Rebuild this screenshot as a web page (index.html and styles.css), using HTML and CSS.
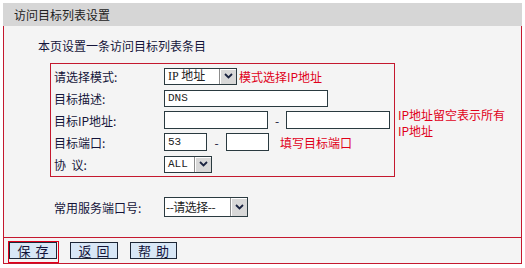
FILE: index.html
```html
<!DOCTYPE html>
<html lang="zh-CN">
<head>
<meta charset="utf-8">
<title>访问目标列表设置</title>
<link rel="stylesheet" href="styles.css">
</head>
<body>
<div class="page">
  <div class="hdr">访问目标列表设置</div>
  <div class="body">
    <div class="intro">本页设置一条访问目标列表条目</div>
    <div class="grp">
      <div class="box">
        <div class="row">
          <span class="lbl">请选择模式:</span>
          <span class="sel w-mode"><span class="val v-mode">IP 地址</span><span class="arr"><svg width="9" height="6" viewBox="0 0 9 6"><path d="M1 1 L4.5 4.5 L8 1" fill="none" stroke="#1a2340" stroke-width="1.8"/></svg></span></span>
          <span class="red m-mode">模式选择IP地址</span>
        </div>
        <div class="row">
          <span class="lbl">目标描述:</span>
          <span class="inp w-dns">DNS</span>
        </div>
        <div class="row">
          <span class="lbl">目标IP地址:</span>
          <span class="inp w-ip tall"></span>
          <span class="dash">-</span>
          <span class="inp w-ip tall"></span>
        </div>
        <div class="row">
          <span class="lbl">目标端口:</span>
          <span class="inp w-port tall">53</span>
          <span class="dash d-port">-</span>
          <span class="inp w-port tall"></span>
          <span class="red m-port">填写目标端口</span>
        </div>
        <div class="row">
          <span class="lbl">协&nbsp;&nbsp;议:</span>
          <span class="sel w-proto"><span class="val">ALL</span><span class="arr"><svg width="9" height="6" viewBox="0 0 9 6"><path d="M1 1 L4.5 4.5 L8 1" fill="none" stroke="#1a2340" stroke-width="1.8"/></svg></span></span>
        </div>
      </div>
      <div class="note red">IP地址留空表示所有IP地址</div>
    </div>
    <div class="row svc">
      <span class="lbl2">常用服务端口号:</span>
      <span class="sel w-svc"><span class="val cjk">--请选择--</span><span class="arr"><svg width="9" height="6" viewBox="0 0 9 6"><path d="M1 1 L4.5 4.5 L8 1" fill="none" stroke="#1a2340" stroke-width="1.8"/></svg></span></span>
    </div>
  </div>
  <div class="btns">
    <span class="bwrap"><span class="btn">保 存</span><span class="hl"></span></span>
    <span class="btn b2">返 回</span>
    <span class="btn b3">帮 助</span>
  </div>
</div>
</body>
</html>
```
FILE: styles.css
```css
html, body {
  margin: 0;
  padding: 0;
  background: #ffffff;
}
.page {
  margin: 3px 0 0 3px;
  width: 519px;
  font: 12px "Noto Sans CJK SC", "Noto Sans", sans-serif;
  color: #14143a;
}
.hdr {
  height: 23px;
  line-height: 23px;
  background: #d6d6d6;
  padding-left: 11px;
  color: #222222;
  font-size: 12px;
}
.body {
  box-sizing: border-box;
  height: 211px;
  border-left: 1px solid #c4182e;
  border-right: 1px solid #c4182e;
  background: #f4f4f4;
  padding: 12px 0 0 34px;
}
.intro {
  line-height: 16px;
}
.grp {
  display: flex;
  align-items: center;
  margin: 9px 0 0 12px;
}
.box {
  width: 343px;
  border: 1px solid #c4182e;
  padding: 1px 0;
}
.row {
  display: flex;
  align-items: center;
  height: 22px;
}
.lbl {
  box-sizing: border-box;
  width: 113px;
  padding-left: 3px;
}
.inp {
  box-sizing: border-box;
  height: 17px;
  border: 1px solid #2a3a40;
  background: #ffffff;
  font: 11px "Liberation Mono", monospace;
  line-height: 15px;
  padding-left: 3px;
  color: #222222;
}
.inp.tall {
  height: 18px;
  line-height: 16px;
}
.w-dns { width: 164px; }
.w-ip { width: 104px; }
.w-port { width: 43px; }
.dash {
  width: 18px;
  text-align: center;
}
.d-port { width: 19px; }
.red {
  color: #e0001a;
}
.m-mode { margin-left: 2px; }
.m-port { margin-left: 11px; }
.sel {
  box-sizing: border-box;
  display: inline-flex;
  height: 17px;
  border: 1px solid #2a3a40;
  background: #ffffff;
}
.sel .val {
  flex: 1;
  padding-left: 3px;
  font: 11px "Liberation Mono", "Noto Sans CJK SC", monospace;
  line-height: 15px;
  color: #222222;
  white-space: nowrap;
  overflow: hidden;
}
.sel .val.v-mode {
  font: 12px "Liberation Serif", "Noto Sans CJK SC", serif;
  line-height: 15px;
}
.sel .val.cjk {
  font: 12px "Noto Sans CJK SC", sans-serif;
  line-height: 18px;
  padding-left: 1px;
  letter-spacing: -0.5px;
}
.sel .arr {
  width: 16px;
  background: #d8d8d8;
  border-left: 1px solid #8c8c8c;
  box-shadow: inset 1px 1px 0 #ffffff;
  display: flex;
  align-items: center;
  justify-content: center;
}
.w-mode { width: 73px; }
.w-proto { width: 48px; }
.w-svc { width: 84px; height: 20px; }
.note {
  width: 112px;
  margin: 6px 0 0 3px;
  line-height: 16px;
}
.svc {
  margin: 20px 0 0 16px;
  height: 20px;
}
.lbl2 {
  width: 110px;
}
.btns {
  border: 1px solid #c4182e;
  background: #f4f4f4;
  display: flex;
  align-items: flex-start;
  padding: 4px 0 0 5px;
  box-sizing: border-box;
  height: 27px;
}
.bwrap {
  position: relative;
  display: inline-flex;
}
.btn {
  box-sizing: border-box;
  width: 48px;
  height: 17px;
  line-height: 15px;
  border: 1px solid #1c2636;
  background: #d8e7f6;
  text-align: center;
  font-size: 13px;
  color: #14143a;
  word-spacing: 2px;
}
.b2 { margin-left: 13px; }
.b3 { margin-left: 12px; width: 47px; }
.hl {
  position: absolute;
  left: -1px;
  top: -1px;
  width: 51px;
  height: 22px;
  box-sizing: border-box;
  border: 1px solid #e0001a;
}
```
